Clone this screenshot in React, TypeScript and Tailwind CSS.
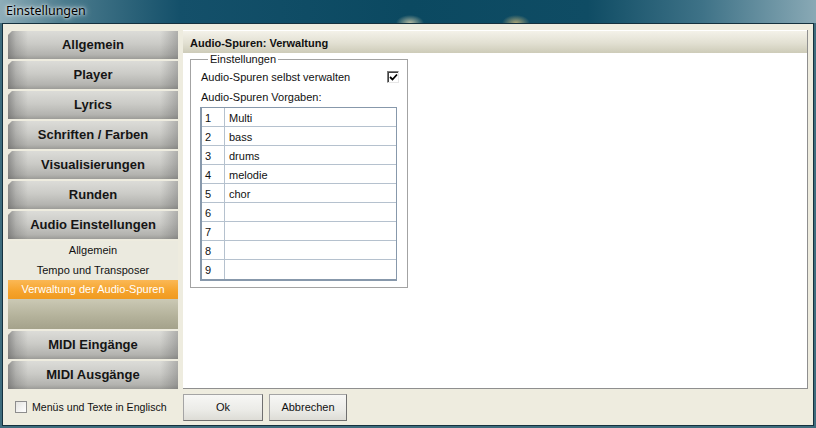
import React from "react";

const navTop = [
  "Allgemein",
  "Player",
  "Lyrics",
  "Schriften / Farben",
  "Visualisierungen",
  "Runden",
  "Audio Einstellungen",
];

const rows = ["Multi", "bass", "drums", "melodie", "chor", "", "", "", ""];

function NavButton({ label }: { label: string }) {
  return (
    <div className="h-[28px] shrink-0 flex items-center justify-center font-bold text-[13px] text-[#151515] [clip-path:polygon(4px_0,100%_0,100%_100%,0_100%,0_4px)] bg-[linear-gradient(to_right,rgba(95,95,95,0.6)_0px,rgba(95,95,95,0.25)_8px,rgba(95,95,95,0)_20px,rgba(0,0,0,0)_152px,rgba(90,90,90,0.35)_170px),linear-gradient(to_bottom,#dcdcd8_0%,#cbcbc7_45%,#b3b3af_85%,#9c9c98_100%)]">
      {label}
    </div>
  );
}

function Check() {
  return (
    <svg width="9" height="9" viewBox="0 0 9 9">
      <path d="M1 4 L3.5 6.5 L8 1.5" fill="none" stroke="#000" strokeWidth="1.8" />
    </svg>
  );
}

export default function App() {
  return (
    <div
      className="w-[816px] h-[428px] flex flex-col bg-[#3e6c7d] px-[2px] pb-[2px] overflow-hidden"
      style={{ fontFamily: '"Liberation Sans", Arial, sans-serif' }}
    >
      {/* Title bar */}
      <div className="h-[23px] -mx-[2px] shrink-0 flex items-center px-[6px] bg-[radial-gradient(ellipse_14px_8px_at_410px_23px,rgba(255,236,190,0.7)_0%,rgba(255,236,190,0)_100%),radial-gradient(ellipse_14px_8px_at_516px_23px,rgba(255,214,130,0.65)_0%,rgba(255,214,130,0)_100%),linear-gradient(to_right,#8eadb8_0%,#4b7b8d_8%,#14506a_22%,#0b4961_50%,#0f4c64_72%,#3e7287_86%,#89a9b5_100%)]">
        <span
          className="text-[12.5px] text-black [text-shadow:0_0_6px_#ffffff,0_0_3px_#ffffff]"
          style={{ fontFamily: '"Noto Sans", "Open Sans", sans-serif' }}
        >
          Einstellungen
        </span>
      </div>

      {/* Window body */}
      <div className="flex-1 flex flex-col border border-[#15313e] bg-[#eeecdf]">
        <div className="flex items-start pt-[6px] pl-[5px] pr-[5px]">
          {/* Sidebar */}
          <div className="w-[170px] h-[358px] mt-[1px] flex flex-col gap-[2px] shrink-0">
            {navTop.map((l) => (
              <NavButton key={l} label={l} />
            ))}
            <div className="h-[88px] shrink-0 flex flex-col bg-[#ebeadf] text-[11px]">
              <div className="h-[19px] flex items-center justify-center text-[#111]">Allgemein</div>
              <div className="h-[20px] flex items-center justify-center text-[#111]">Tempo und Transposer</div>
              <div className="h-[19px] flex items-center justify-center text-white bg-[linear-gradient(to_bottom,#fbb855,#f5a32b_60%,#f09a20)]">
                Verwaltung der Audio-Spuren
              </div>
              <div className="flex-1 bg-[linear-gradient(to_bottom,#cbc9b5,#b3b19a_60%,#a4a28b)]" />
            </div>
            <NavButton label="MIDI Eingänge" />
            <NavButton label="MIDI Ausgänge" />
          </div>

          {/* Main panel */}
          <div className="ml-[5px] flex-1 h-[359px] flex flex-col border-r border-b border-[#8f8f8f] bg-white">
            <div className="h-[23px] shrink-0 flex items-center pl-[7px] pt-[2px] border-t border-white bg-[linear-gradient(to_bottom,#f4f2e9,#e2e0d2_55%,#cdcbb8)]">
              <span className="text-[11px] font-bold text-[#111]">Audio-Spuren: Verwaltung</span>
            </div>
            <div className="flex-1 pl-[7px] pt-0">
              <fieldset className="w-[217px] h-[235px] border border-[#a3a3a3] px-[10px] pb-[9px] text-[11px] text-[#111]">
                <legend className="ml-[7px] px-[2px] leading-[12px]">Einstellungen</legend>
                <div className="mt-[5px] h-[14px] flex items-center justify-between">
                  <span>Audio-Spuren selbst verwalten</span>
                  <div className="w-[12px] h-[12px] mr-[-2px] flex items-center justify-center bg-white border border-t-[#7c7c7c] border-l-[#7c7c7c] border-b-[#e6e6e6] border-r-[#e6e6e6] shadow-[inset_1px_1px_0_#404040]">
                    <Check />
                  </div>
                </div>
                <div className="mt-[6px] h-[14px] flex items-center">Audio-Spuren Vorgaben:</div>
                <div className="mt-[3px] w-[197px] -ml-[1px] border border-[#8798ab] border-l-2 border-b-2">
                  {rows.map((r, i) => (
                    <div
                      key={i}
                      className={`flex h-[19px] ${i < rows.length - 1 ? "border-b border-[#b5c1ce]" : ""}`}
                    >
                      <div className="w-[23px] shrink-0 border-r border-[#b5c1ce] pl-[3px] pt-[3px] leading-[14px]">
                        {i + 1}
                      </div>
                      <div className="flex-1 pl-[4px] pt-[3px] leading-[14px]">{r}</div>
                    </div>
                  ))}
                </div>
              </fieldset>
            </div>
          </div>
        </div>

        {/* Bottom row */}
        <div className="mt-[5px] flex items-center h-[27px]">
          <div className="w-[180px] shrink-0 flex items-center pl-[12px] gap-[5px]">
            <div className="w-[12px] h-[12px] border border-[#8d8d8d] bg-[linear-gradient(to_bottom_right,#e4e4e0,#ffffff)]" />
            <span className="text-[10.6px] text-[#111]">Menüs und Texte in Englisch</span>
          </div>
          <button className="w-[80px] h-[27px] text-[11px] text-[#111] border border-[#a4a4a4] border-r-[#6f6f6f] border-b-[#6f6f6f] bg-[linear-gradient(to_bottom,#f7f7f5,#ebebe7_60%,#dddcd6)]">
            Ok
          </button>
          <button className="ml-[6px] w-[78px] h-[27px] text-[11px] text-[#111] border border-[#a4a4a4] border-r-[#6f6f6f] border-b-[#6f6f6f] bg-[linear-gradient(to_bottom,#f7f7f5,#ebebe7_60%,#dddcd6)]">
            Abbrechen
          </button>
        </div>
      </div>
    </div>
  );
}
